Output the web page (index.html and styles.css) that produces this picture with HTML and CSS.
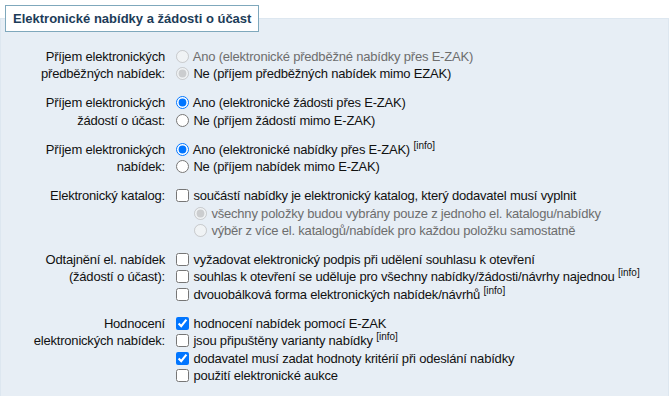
FILE: index.html
```html
<!DOCTYPE html>
<html lang="cs">
    <head>
        <meta charset="UTF-8" />
        <meta name="viewport" content="width=device-width, initial-scale=1.0" />
        <link rel="stylesheet" href="styles.css">
        <title>Elektronické nabídky</title>
    </head>
    <body>
        <fieldset class="box">
            <legend class="box-title">Elektronické nabídky a žádosti o účast</legend>

            <div class="form">
                <!-- předběžné nabídky -->
                <div class="row">
                    <div class="row-label">Příjem elektronických<br />předběžných nabídek:</div>
                    <div class="row-opts">
                        <label class="opt is-disabled"><input type="radio" name="pred" disabled /> Ano (elektronické předběžné nabídky přes E-ZAK)</label>
                        <label class="opt"><input type="radio" name="pred" checked disabled /> Ne (příjem předběžných nabídek mimo EZAK)</label>
                    </div>
                </div>

                <!-- žádosti -->
                <div class="row">
                    <div class="row-label">Příjem elektronických<br />žádostí o účast:</div>
                    <div class="row-opts">
                        <label class="opt"><input type="radio" name="zad" checked /> Ano (elektronické žádosti přes E-ZAK)</label>
                        <label class="opt"><input type="radio" name="zad" /> Ne (příjem žádostí mimo E-ZAK)</label>
                    </div>
                </div>

                <!-- nabídky -->
                <div class="row">
                    <div class="row-label">Příjem elektronických<br />nabídek:</div>
                    <div class="row-opts">
                        <label class="opt"><input type="radio" name="nab" checked /> Ano (elektronické nabídky přes E-ZAK) <sup class="info">[info]</sup></label>
                        <label class="opt"><input type="radio" name="nab" /> Ne (příjem nabídek mimo E-ZAK)</label>
                    </div>
                </div>

                <!-- katalog -->
                <div class="row">
                    <div class="row-label">Elektronický katalog:</div>
                    <div class="row-opts">
                        <label class="opt"><input type="checkbox" /> součástí nabídky je elektronický katalog, který dodavatel musí vyplnit</label>
                        <label class="opt opt-sub is-disabled"><input type="radio" name="kat" checked disabled /> všechny položky budou vybrány pouze z jednoho el. katalogu/nabídky</label>
                        <label class="opt opt-sub is-disabled"><input type="radio" name="kat" disabled /> výběr z více el. katalogů/nabídek pro každou položku samostatně</label>
                    </div>
                </div>

                <!-- odtajnění -->
                <div class="row">
                    <div class="row-label">Odtajnění el. nabídek<br />(žádostí o účast):</div>
                    <div class="row-opts">
                        <label class="opt"><input type="checkbox" /> vyžadovat elektronický podpis při udělení souhlasu k otevření</label>
                        <label class="opt"><input type="checkbox" /> souhlas k otevření se uděluje pro všechny nabídky/žádosti/návrhy najednou <sup class="info">[info]</sup></label>
                        <label class="opt"><input type="checkbox" /> dvouobálková forma elektronických nabídek/návrhů <sup class="info">[info]</sup></label>
                    </div>
                </div>

                <!-- hodnocení -->
                <div class="row">
                    <div class="row-label">Hodnocení<br />elektronických nabídek:</div>
                    <div class="row-opts">
                        <label class="opt"><input type="checkbox" checked /> hodnocení nabídek pomocí E-ZAK</label>
                        <label class="opt"><input type="checkbox" /> jsou připuštěny varianty nabídky <sup class="info">[info]</sup></label>
                        <label class="opt"><input type="checkbox" checked /> dodavatel musí zadat hodnoty kritérií při odeslání nabídky</label>
                        <label class="opt"><input type="checkbox" /> použití elektronické aukce</label>
                    </div>
                </div>
            </div>
        </fieldset>
    </body>
</html>
```

FILE: styles.css
```css
/* základ */
body,
html {
    margin: 0;
    padding: 0;
    background: #ffffff;
    font-family: "Liberation Sans", Arial, sans-serif;
    font-size: 13px;
    color: #111111;
}

/* rámeček sekce */
.box {
    margin: 5px 0 0 0;
    padding: 0 0 20px 0;
    border: 1px solid #dde7f0;
    background: #e7eef5;
}

.box-title {
    margin-left: 4px;
    padding: 5px 7px;
    border: 1px solid #7fa8bc;
    background: #ffffff;
    color: #1c3c58;
    font-weight: bold;
    line-height: 15px;
}

.form {
    display: flex;
    flex-direction: column;
    gap: 11.6px;
    padding-top: 16px;
    letter-spacing: -0.2px;
}

.row {
    display: grid;
    grid-template-columns: 164px 1fr;
    line-height: 17.4px;
}

.row-label {
    text-align: right;
}

.row-opts {
    display: flex;
    flex-direction: column;
    padding-left: 8px;
}

.opt {
    display: block;
    white-space: nowrap;
}

.opt input {
    margin: 0 1px 0 3px;
    width: 13px;
    height: 13px;
    vertical-align: -2px;
}

.opt-sub {
    padding-left: 18px;
}

.is-disabled {
    color: #6d6d6d;
}

.info {
    font-size: 10px;
    line-height: 0;
    letter-spacing: 0;
}
```
